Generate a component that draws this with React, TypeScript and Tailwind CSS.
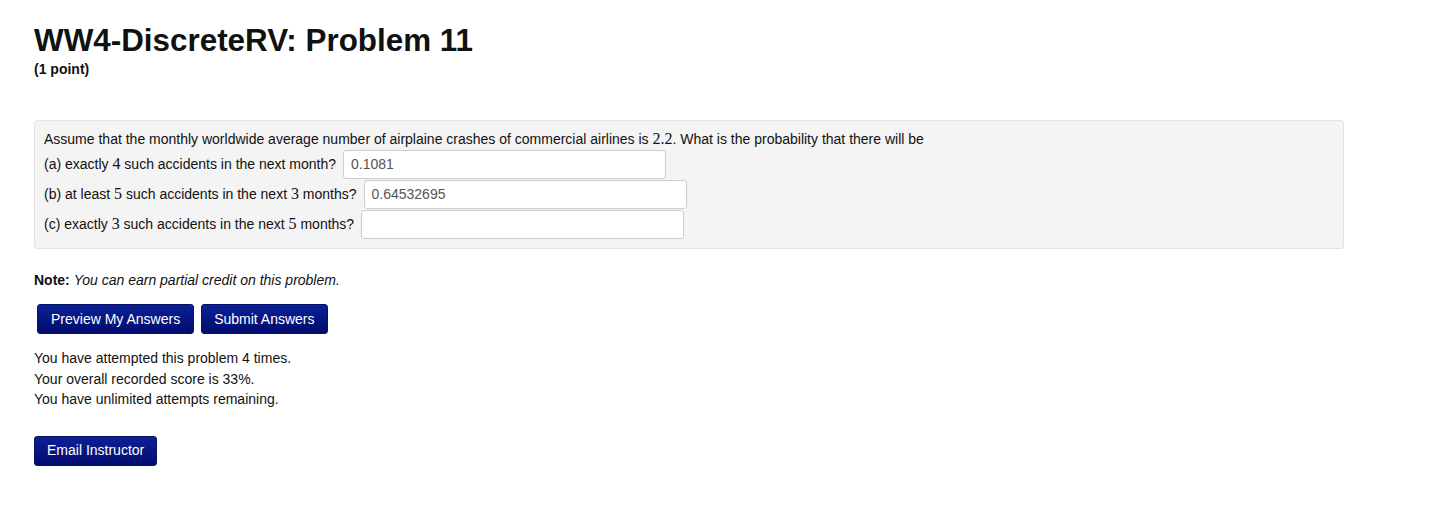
export default function App() {
  const m = "font-['Liberation_Serif',serif] text-[16px]";
  const input =
    "ml-[7px] w-[323px] h-[29px] bg-white border border-[#ccc] rounded-[3px] px-[7px] text-[14px] text-[#555] outline-none";
  const btn =
    "h-[30px] rounded-[3px] border border-[#041166] bg-gradient-to-b from-[#0c2196] to-[#020b6e] text-white text-[14px]";
  return (
    <div className="min-h-screen bg-white font-['Liberation_Sans',Arial,sans-serif] text-[#111] pl-[34px] pr-[113px] pt-[22px]">
      <h1 className="text-[31.4px] font-bold leading-[38px]">WW4-DiscreteRV: Problem 11</h1>
      <div className="text-[14px] font-bold leading-[16px] mt-[1px]">(1 point)</div>

      <div className="mt-[43px] bg-[#f4f4f4] border border-[#e3e3e3] rounded-[3px] pl-[9px] pr-3 pt-[8px] pb-[9px] text-[14px] w-[1310px]">
        <div className="leading-[19px]">
          Assume that the monthly worldwide average number of airplaine crashes of commercial airlines is{" "}
          <span className={m}>2.2</span>. What is the probability that there will be
        </div>
        <div className="flex items-center h-[30px]">
          <span>(a) exactly <span className={m}>4</span> such accidents in the next month?</span>
          <input readOnly value="0.1081" className={input} />
        </div>
        <div className="flex items-center h-[30px]">
          <span>(b) at least <span className={m}>5</span> such accidents in the next <span className={m}>3</span> months?</span>
          <input readOnly value="0.64532695" className={input} />
        </div>
        <div className="flex items-center h-[30px]">
          <span>(c) exactly <span className={m}>3</span> such accidents in the next <span className={m}>5</span> months?</span>
          <input readOnly value="" className={input} />
        </div>
      </div>

      <div className="mt-[22px] text-[14px] leading-[18px]">
        <span className="font-bold">Note:</span> <i>You can earn partial credit on this problem.</i>
      </div>

      <div className="flex gap-[7px] ml-[3px] mt-[15px]">
        <button className={`${btn} px-[13px]`}>Preview My Answers</button>
        <button className={`${btn} px-[12px]`}>Submit Answers</button>
      </div>

      <div className="mt-[14px] text-[14px] leading-[20.5px]">
        <div>You have attempted this problem 4 times.</div>
        <div>Your overall recorded score is 33%.</div>
        <div>You have unlimited attempts remaining.</div>
      </div>

      <button className={`${btn} mt-[26px] px-[12px]`}>Email Instructor</button>
    </div>
  );
}
